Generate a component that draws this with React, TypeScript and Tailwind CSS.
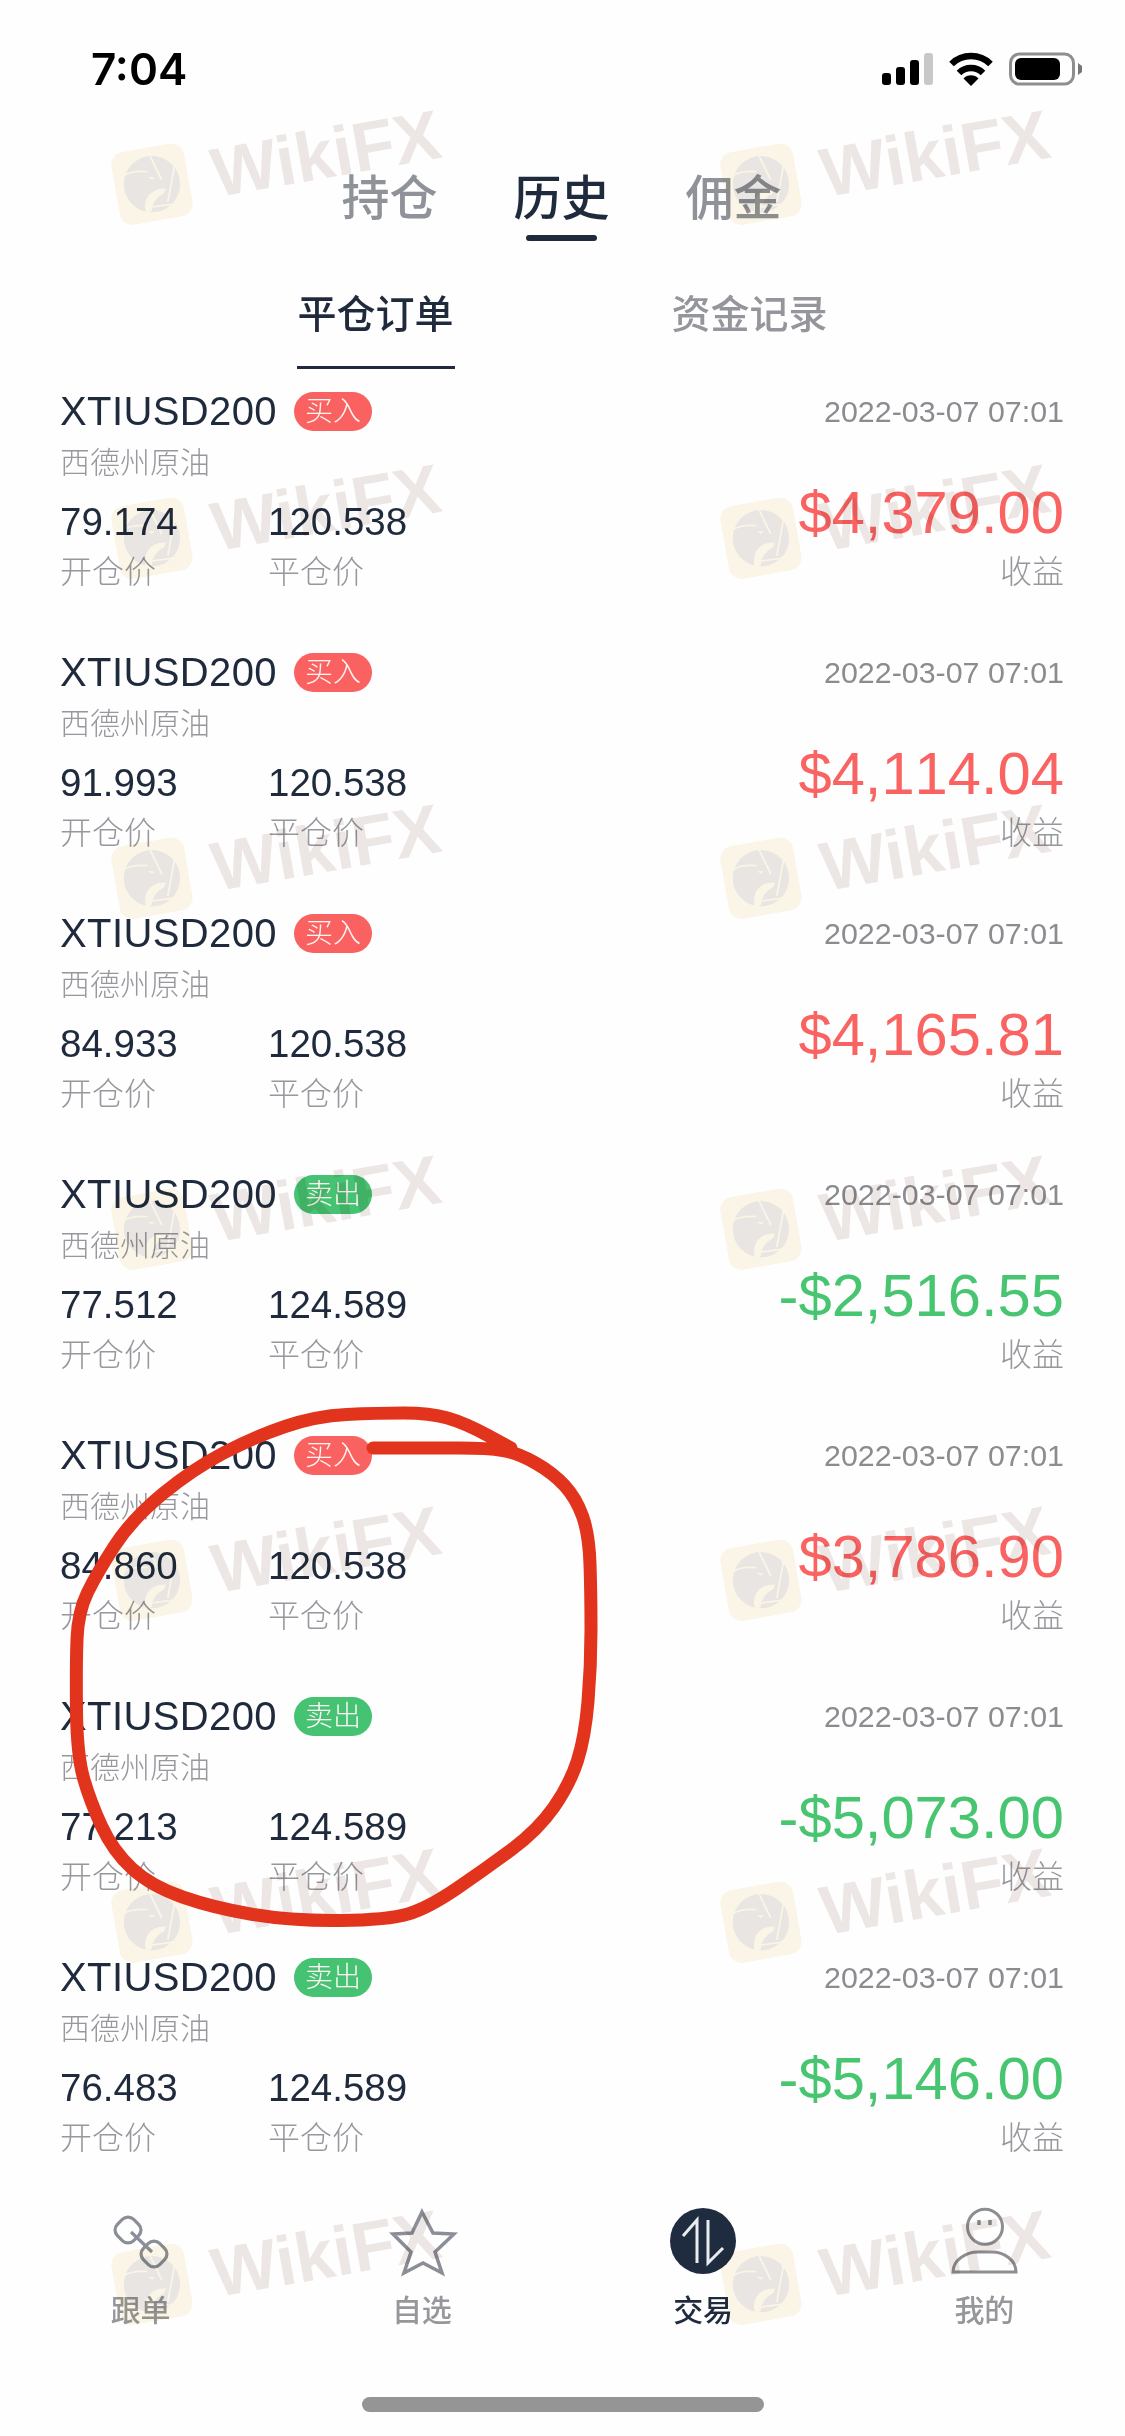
import type React from "react";

const orders = [
  { side: "买入", open: "79.174", close: "120.538", pnl: "$4,379.00" },
  { side: "买入", open: "91.993", close: "120.538", pnl: "$4,114.04" },
  { side: "买入", open: "84.933", close: "120.538", pnl: "$4,165.81" },
  { side: "卖出", open: "77.512", close: "124.589", pnl: "-$2,516.55" },
  { side: "买入", open: "84.860", close: "120.538", pnl: "$3,786.90" },
  { side: "卖出", open: "77.213", close: "124.589", pnl: "-$5,073.00" },
  { side: "卖出", open: "76.483", close: "124.589", pnl: "-$5,146.00" },
];

const wmTops = [
  "top-[126px]",
  "top-[480px]",
  "top-[820px]",
  "top-[1171px]",
  "top-[1522px]",
  "top-[1864px]",
  "top-[2226px]",
];

const circlePts: [number, number][] = [
  [373, 1448], [430, 1448], [488, 1448], [518, 1453], [553, 1473], [576, 1498], [589, 1534], [591, 1594],
  [591, 1666], [585, 1737], [570, 1784], [538, 1830], [484, 1870], [428, 1908], [388, 1920],
  [292, 1921], [214, 1908], [151, 1886], [113, 1851], [90, 1801], [77, 1755], [76, 1666],
  [78, 1612], [97, 1573], [132, 1519], [193, 1469], [254, 1437], [316, 1416], [377, 1413],
  [430, 1413], [465, 1423], [511, 1448],
];

function smooth(pts: [number, number][]) {
  let d = `M${pts[0][0]} ${pts[0][1]}`;
  for (let i = 1; i < pts.length - 1; i++) {
    const mx = (pts[i][0] + pts[i + 1][0]) / 2;
    const my = (pts[i][1] + pts[i + 1][1]) / 2;
    d += ` Q${pts[i][0]} ${pts[i][1]} ${mx} ${my}`;
  }
  const l = pts[pts.length - 1];
  return d + ` L${l[0]} ${l[1]}`;
}

function Eagle() {
  const cream = "#fbf6e7";
  return (
    <svg viewBox="0 0 100 100" className="w-[74px] h-[74px] shrink-0">
      <rect x="0" y="0" width="100" height="100" rx="18" fill={cream} />
      <g transform="rotate(10 50 50)">
        <circle cx="50" cy="50" r="38" fill="#e9e6e3" />
        <g stroke={cream} strokeWidth="2.4" fill="none">
          <path d="M47.6 12 L63.3 44.3" />
          <path d="M81 22 L71.4 74" />
          <path d="M87 76 L47.6 81" />
          <path d="M11 39 C20 33 30 32 44 33" />
        </g>
        <path d="M69 55.7 Q50 55 43 69 Q38 81 43 90.4 L50 85.7 Q50 71.5 66.6 62 Z" fill={cream} />
        <path d="M44 40 L54 41 L50 44 Z" fill={cream} />
      </g>
    </svg>
  );
}

function Mark() {
  return (
    <div className="flex items-center gap-[24px] w-[330px] h-[72px] -rotate-[10deg]">
      <Eagle />
      <span className="font-['Liberation_Sans',sans-serif] font-bold text-[69.5px] leading-[72px] text-[#ede8e5] whitespace-nowrap">
        WikiFX
      </span>
    </div>
  );
}

function Label({ children }: { children: string }) {
  return <div className="h-[40px] text-[32px] leading-[40px] font-light text-[#97989d]">{children}</div>;
}

function Row({ o }: { o: (typeof orders)[number] }) {
  const buy = o.side === "买入";
  return (
    <div className="flex justify-between pl-[60px] pr-[61px] [font-kerning:none]">
      <div className="flex flex-col">
        <div className="flex items-center h-[50px]">
          <span className="text-[40px] leading-[50px] text-[#1f2a3c] tracking-[0.4px]">XTIUSD200</span>
          <span
            className={`ml-[17px] flex items-center justify-center w-[78px] h-[39px] rounded-full text-[28px] leading-[39px] font-light text-[#fff5f5] ${
              buy ? "bg-[#fa6261]" : "bg-[#46c372]"
            }`}
          >
            {o.side}
          </span>
        </div>
        <div className="mt-[9px] h-[36px] text-[30px] leading-[36px] font-light text-[#97989d]">西德州原油</div>
        <div className="mt-[22px] grid grid-cols-[208px_auto]">
          <div className="h-[38px] text-[38.5px] leading-[38px] text-[#1f2a3c]">{o.open}</div>
          <div className="h-[38px] text-[38.5px] leading-[38px] text-[#1f2a3c]">{o.close}</div>
          <div className="mt-[11px]"><Label>开仓价</Label></div>
          <div className="mt-[11px]"><Label>平仓价</Label></div>
        </div>
      </div>
      <div className="flex flex-col items-end">
        <div className="h-[50px] text-[30.4px] leading-[50px] text-[#8b8b90]">2022-03-07 07:01</div>
        <div className={`mt-[42px] h-[70px] text-[59.7px] leading-[70px] ${buy ? "text-[#f96362]" : "text-[#47c570]"}`}>
          {o.pnl}
        </div>
        <div className="mt-[4px]"><Label>收益</Label></div>
      </div>
    </div>
  );
}

function NavItem({ label, active, children }: { label: string; active?: boolean; children: React.ReactNode }) {
  return (
    <div className="flex flex-col items-center">
      <div className="w-[72px] h-[72px]">{children}</div>
      <div className={`mt-[14px] h-[40px] text-[30px] leading-[40px] font-medium ${active ? "text-[#1f2a3c]" : "text-[#96979b]"}`}>
        {label}
      </div>
    </div>
  );
}

export default function App() {
  return (
    <div className="relative w-[1125px] h-[2436px] overflow-hidden bg-[#fefefe] font-['Liberation_Sans','Noto_Sans_CJK_SC',sans-serif]">
      {/* status bar */}
      <div className="flex items-center justify-between pt-[52px] pl-[91px] pr-[42px] h-[86px]">
        <span className="font-['Inter',sans-serif] font-semibold text-[44px] leading-[34px] text-black">7:04</span>
        <div className="flex items-center gap-[15px]">
          <svg width="51" height="32" viewBox="0 0 51 32">
            <rect x="0" y="20" width="9" height="12" rx="3" fill="#000" />
            <rect x="14" y="14" width="9" height="18" rx="3" fill="#000" />
            <rect x="28" y="7" width="9" height="25" rx="3" fill="#000" />
            <rect x="42" y="0" width="9" height="32" rx="3" fill="#c8c8c8" />
          </svg>
          <svg width="46" height="34" viewBox="0 0 46 34">
            <path d="M3.5 12 A28 28 0 0 1 42.5 12" stroke="#000" strokeWidth="6.5" fill="none" />
            <path d="M11 21 A17 17 0 0 1 35 21" stroke="#000" strokeWidth="6.5" fill="none" />
            <path d="M15.5 26.5 A10.5 10.5 0 0 1 30.5 26.5 L23 34 Z" fill="#000" />
          </svg>
          <svg width="74" height="34" viewBox="0 0 74 34">
            <rect x="1.5" y="2" width="63" height="30" rx="9" fill="none" stroke="#8e8e8e" strokeWidth="3" />
            <rect x="6" y="6" width="45" height="22" rx="6" fill="#000" />
            <path d="M69 11 L73 14 L73 20 L69 23 Z" fill="#777" />
          </svg>
        </div>
      </div>

      {/* main tabs */}
      <div className="mt-[85px] flex justify-center gap-[76px] pr-[2px]">
        {[
          ["持仓", false],
          ["历史", true],
          ["佣金", false],
        ].map(([t, on]) => (
          <div key={t as string} className="flex flex-col items-center">
            <span className={`text-[48px] leading-[56px] font-medium ${on ? "text-[#1f2a3c]" : "text-[#8f9299]"}`}>{t as string}</span>
            <span className={`mt-[8px] w-[71px] h-[6px] rounded-full ${on ? "bg-[#1f2a3c]" : "bg-transparent"}`} />
          </div>
        ))}
      </div>

      {/* sub tabs */}
      <div className="mt-[51px] flex justify-center gap-[216px]">
        <div className="flex flex-col items-center w-[158px]">
          <span className="text-[39px] leading-[46px] font-medium text-[#1f2a3c] whitespace-nowrap">平仓订单</span>
          <span className="mt-[28px] w-[158px] h-[3px] bg-[#1f2a3c]" />
        </div>
        <div className="flex flex-col items-center w-[158px]">
          <span className="text-[39px] leading-[46px] font-medium text-[#94969c] whitespace-nowrap">资金记录</span>
        </div>
      </div>

      {/* orders */}
      <div className="mt-[17px] flex flex-col gap-[55px]">
        {orders.map((o, i) => (
          <Row key={i} o={o} />
        ))}
      </div>

      {/* tab bar */}
      <div className="mt-[47px] grid grid-cols-4">
        <NavItem label="跟单">
          <svg viewBox="0 0 72 72" className="w-[72px] h-[72px]" fill="none" stroke="#8b8e96" strokeWidth="3.2">
            <rect x="11.5" y="13.5" width="23" height="23" rx="8" transform="rotate(45 23 25)" />
            <rect x="37.5" y="37.5" width="23" height="23" rx="8" transform="rotate(45 49 49)" />
            <path d="M26 27 L47 47" />
          </svg>
        </NavItem>
        <NavItem label="自选">
          <svg viewBox="0 0 72 72" className="w-[72px] h-[72px]" fill="none" stroke="#8b8e96" strokeWidth="3.5">
            <path d="M36 7 L47 28 L68 29 L49 47 L56 68 L37 58 L18 68 L25 47 L7 29 L26 28 Z" />
          </svg>
        </NavItem>
        <NavItem label="交易" active>
          <svg viewBox="0 0 72 72" className="w-[72px] h-[72px]" fill="none">
            <circle cx="36" cy="36" r="33" fill="#1f2c40" />
            <path d="M30 58 L30 15 L16 31" stroke="#e8ecef" strokeWidth="3" />
            <path d="M41 15 L41 58 L56 43" stroke="#e8ecef" strokeWidth="3" />
          </svg>
        </NavItem>
        <NavItem label="我的">
          <svg viewBox="0 0 72 72" className="w-[72px] h-[72px]" fill="none" stroke="#8e8e92" strokeWidth="3">
            <circle cx="37" cy="21.7" r="17.5" />
            <path d="M31 15 L31 20 M42 15 L42 20" strokeWidth="3.5" />
            <path d="M5 67 C5 55 18 47 30 47 L44 47 C56 47 68 55 68 67 Z" />
          </svg>
        </NavItem>
      </div>

      {/* home indicator */}
      <div className="mt-[66px] mx-auto w-[402px] h-[15px] rounded-full bg-[#959595]" />

      {/* watermark overlay */}
      <div className="absolute inset-0 pointer-events-none mix-blend-multiply">
        {wmTops.map((top) => (
          <div key={top}>
            <div className={`absolute left-[113px] ${top}`}><Mark /></div>
            <div className={`absolute left-[722px] ${top}`}><Mark /></div>
          </div>
        ))}
      </div>

      {/* hand-drawn annotation */}
      <svg className="absolute inset-0 pointer-events-none" width="1125" height="2436" viewBox="0 0 1125 2436" fill="none">
        <path d={smooth(circlePts)} stroke="#e2331d" strokeWidth="13" strokeLinecap="round" strokeLinejoin="round" />
      </svg>
    </div>
  );
}
